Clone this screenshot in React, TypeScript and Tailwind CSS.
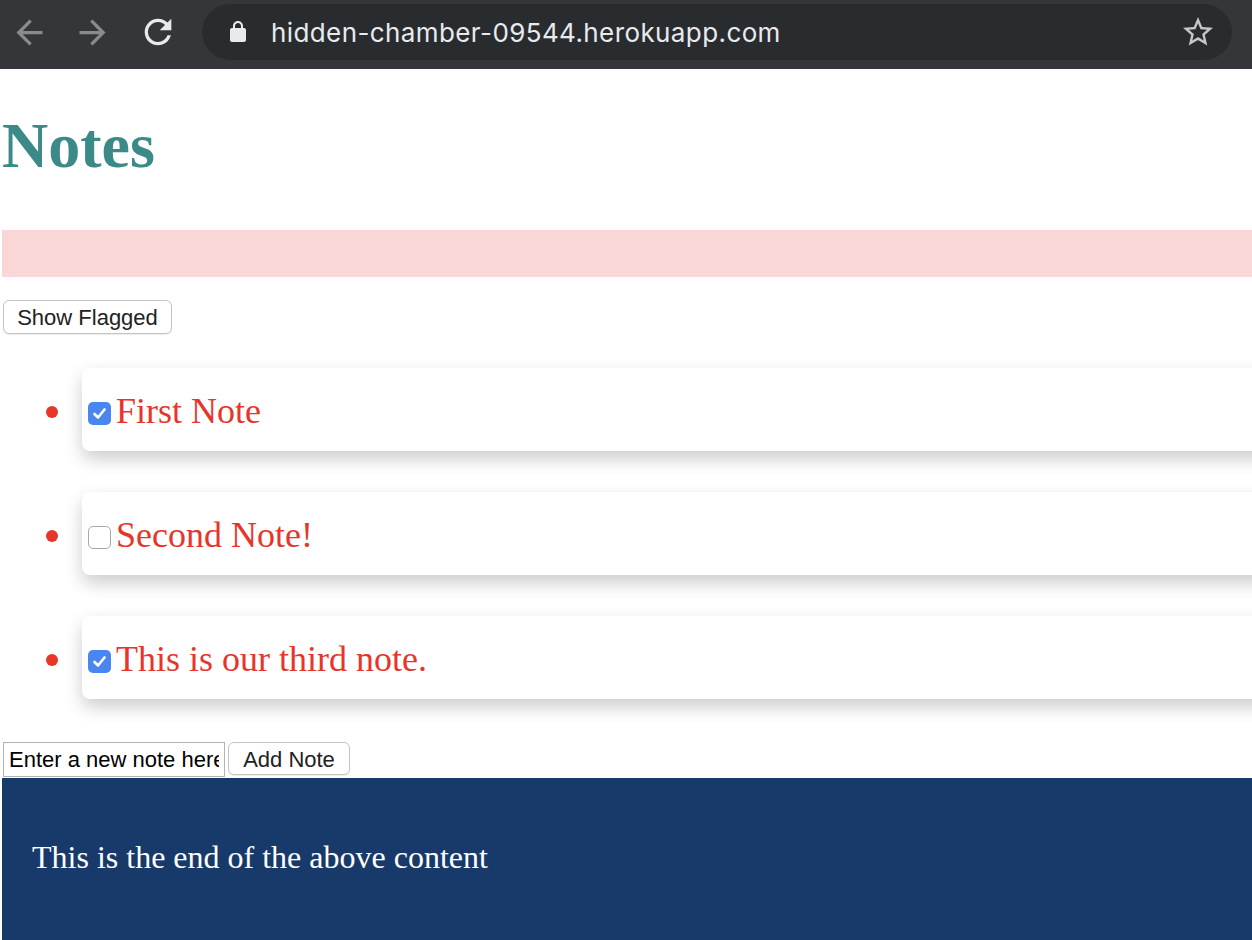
const notes = [
  { text: "First Note", done: true },
  { text: "Second Note!", done: false },
  { text: "This is our third note.", done: true },
];

function BrowserBar() {
  return (
    <div className="h-[69px] bg-[#35363a] pt-[4px] flex items-start">
      <div className="h-[56px] flex items-center w-full">
        <svg className="ml-[10px]" width="39" height="39" viewBox="0 0 24 24" fill="#8a8b8d">
          <path d="M20 11H7.83l5.59-5.59L12 4l-8 8 8 8 1.41-1.41L7.83 13H20v-2z" />
        </svg>
        <svg className="ml-[24px]" width="39" height="39" viewBox="0 0 24 24" fill="#8a8b8d">
          <path d="M12 4l-1.41 1.41L16.17 11H4v2h12.17l-5.58 5.59L12 20l8-8z" />
        </svg>
        <svg className="ml-[26px]" width="40" height="40" viewBox="0 0 24 24" fill="#e8eaed">
          <path d="M17.65 6.35C16.2 4.9 14.21 4 12 4c-4.42 0-7.99 3.58-7.99 8s3.57 8 7.99 8c3.73 0 6.84-2.55 7.73-6h-2.080c-.82 2.33-3.04 4-5.65 4-3.31 0-6-2.690-6-6s2.69-6 6-6c1.66 0 3.14.69 4.22 1.78L13 11h7V4l-2.35 2.35z" />
        </svg>
        <div className="ml-[24px] mr-[20px] flex-1 h-[56px] rounded-full bg-[#292c2f] flex items-center pl-[24px] pr-[16px]">
          <svg width="24" height="24" viewBox="0 0 24 24" fill="#e8eaed">
            <path d="M18 8h-1V6c0-2.76-2.24-5-5-5S7 3.24 7 6v2H6c-1.1 0-2 .9-2 2v10c0 1.1.9 2 2 2h12c1.1 0 2-.9 2-2V10c0-1.1-.9-2-2-2zM9 6c0-1.66 1.34-3 3-3s3 1.34 3 3v2H9V6z" />
          </svg>
          <span className="ml-[21px] text-[26px] text-[#e8eaed] font-['Inter',sans-serif] tracking-[0.4px]">
            hidden-chamber-09544.herokuapp.com
          </span>
          <svg className="ml-auto" width="36" height="36" viewBox="0 0 24 24" fill="#c4c7c9">
            <path d="M22 9.24l-7.19-.62L12 2 9.19 8.63 2 9.24l5.46 4.73L5.82 21 12 17.27 18.18 21l-1.63-7.03L22 9.24zM12 15.4l-3.76 2.27 1-4.28-3.32-2.88 4.38-.38L12 6.1l1.71 4.04 4.38.38-3.32 2.88 1 4.28L12 15.4z" />
          </svg>
        </div>
      </div>
    </div>
  );
}

function Checkbox({ checked }: { checked: boolean }) {
  if (checked) {
    return (
      <span className="w-[23px] h-[23px] rounded-[5px] bg-[#4a86f0] flex items-center justify-center shrink-0">
        <svg width="23" height="23" viewBox="0 0 23 23" fill="none" stroke="white" strokeWidth="2.6" strokeLinecap="round" strokeLinejoin="round">
          <path d="M6.5 12 L10 15.5 L16.5 7.5" />
        </svg>
      </span>
    );
  }
  return <span className="block w-[23px] h-[23px] rounded-[5px] border-[1.5px] border-[#a9a9a9] bg-white shrink-0" />;
}

function NoteRow({ text, done }: { text: string; done: boolean }) {
  return (
    <li className="flex items-center h-[83px]">
      <span className="ml-[44px] mt-[5px] w-[12px] h-[12px] rounded-full bg-[#e8352a] shrink-0" />
      <div className="ml-[24px] -mr-[40px] flex-1 h-[83px] rounded-[8px] bg-white shadow-[0_8px_18px_rgba(0,0,0,0.2)] pt-[23px]">
        <div className="flex items-end h-[40px]">
          <span className="block ml-[6px] mb-[6px]">
            <Checkbox checked={done} />
          </span>
          <span className="ml-[5px] text-[36px] leading-[40px] text-[#e8352a] font-['Liberation_Serif',serif]">{text}</span>
        </div>
      </div>
    </li>
  );
}

export default function App() {
  return (
    <div className="w-[1252px] h-[940px] overflow-hidden bg-white">
      <BrowserBar />
      <div className="pl-[2px]">
        <h1 className="mt-[41px] text-[64px] leading-[71px] font-bold text-[#3b8a87] font-['Liberation_Serif',serif]">Notes</h1>
        <div className="mt-[49px] h-[47px] bg-[#f8d7d6]" />
        <button className="mt-[23px] ml-[1px] w-[169px] h-[34px] rounded-[6px] border border-[#c4c4c4] bg-white text-[22px] text-[#222] font-['Liberation_Sans',sans-serif] shadow-[0_1px_1px_rgba(0,0,0,0.08)]">
          Show Flagged
        </button>
        <ul className="mt-[34px] flex flex-col gap-[41px]">
          {notes.map((n) => (
            <NoteRow key={n.text} text={n.text} done={n.done} />
          ))}
        </ul>
        <div className="mt-[43px] h-[36px] flex items-start">
          <input
            className="ml-[1px] w-[222px] h-[35px] border border-[#b3b3b3] px-[5px] text-[22px] text-black font-['Liberation_Sans',sans-serif] outline-none"
            defaultValue="Enter a new note here."
          />
          <button className="ml-[3px] w-[122px] h-[33px] rounded-[6px] border border-[#c4c4c4] bg-white text-[22px] text-[#222] font-['Liberation_Sans',sans-serif] shadow-[0_1px_1px_rgba(0,0,0,0.08)]">
            Add Note
          </button>
        </div>
        <footer className="h-[170px] bg-[#173a6a] pt-[62px] pl-[30px]">
          <p className="text-[32px] leading-[35px] text-white font-['Liberation_Serif',serif]">This is the end of the above content</p>
        </footer>
      </div>
    </div>
  );
}
